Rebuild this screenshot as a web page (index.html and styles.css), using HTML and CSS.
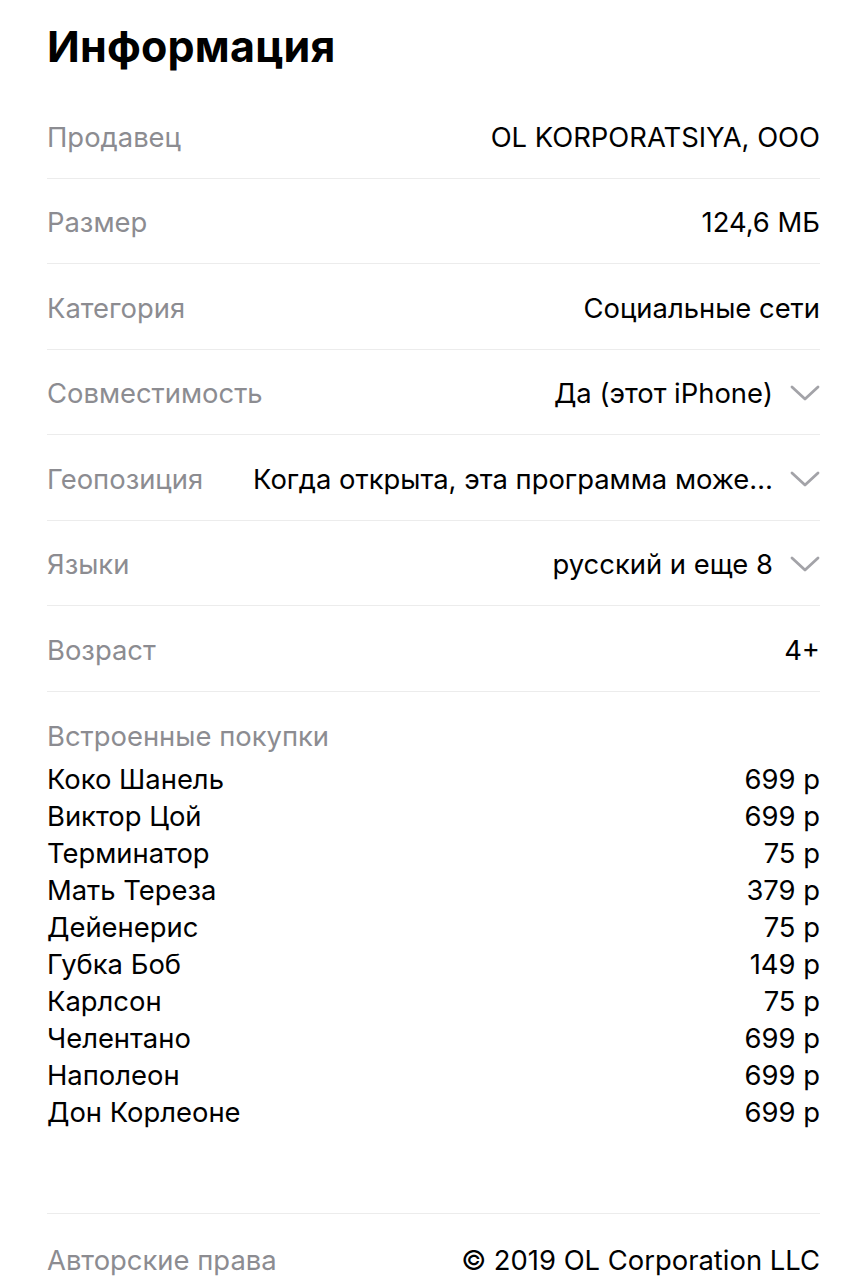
FILE: index.html
```html
<!DOCTYPE html>
<html lang="ru">
<head>
<meta charset="utf-8">
<link rel="stylesheet" href="styles.css">
</head>
<body>
<main class="info">
  <h1 class="title">Информация</h1>
  <div class="row"><span class="label">Продавец</span><span class="value">OL KORPORATSIYA, OOO</span></div>
  <div class="row"><span class="label">Размер</span><span class="value">124,6 МБ</span></div>
  <div class="row"><span class="label">Категория</span><span class="value">Социальные сети</span></div>
  <div class="row"><span class="label">Совместимость</span><span class="value">Да (этот iPhone)</span><svg class="chev" viewBox="0 0 30 16"><path d="M2 2 L15 14 L28 2"/></svg></div>
  <div class="row"><span class="label">Геопозиция</span><span class="value">Когда открыта, эта программа може…</span><svg class="chev" viewBox="0 0 30 16"><path d="M2 2 L15 14 L28 2"/></svg></div>
  <div class="row"><span class="label">Языки</span><span class="value">русский и еще 8</span><svg class="chev" viewBox="0 0 30 16"><path d="M2 2 L15 14 L28 2"/></svg></div>
  <div class="row"><span class="label">Возраст</span><span class="value">4+</span></div>
  <section class="purchases">
    <div class="label phead">Встроенные покупки</div>
    <ul class="plist">
      <li><span>Коко Шанель</span><span>699 р</span></li>
      <li><span>Виктор Цой</span><span>699 р</span></li>
      <li><span>Терминатор</span><span>75 р</span></li>
      <li><span>Мать Тереза</span><span>379 р</span></li>
      <li><span>Дейенерис</span><span>75 р</span></li>
      <li><span>Губка Боб</span><span>149 р</span></li>
      <li><span>Карлсон</span><span>75 р</span></li>
      <li><span>Челентано</span><span>699 р</span></li>
      <li><span>Наполеон</span><span>699 р</span></li>
      <li><span>Дон Корлеоне</span><span>699 р</span></li>
    </ul>
  </section>
  <div class="row last"><span class="label">Авторские права</span><span class="value">© 2019 OL Corporation LLC</span></div>
</main>
</body>
</html>
```

FILE: styles.css
```css
html, body {
  margin: 0;
  padding: 0;
  background: #ffffff;
}
body {
  font-family: "Inter", "Liberation Sans", sans-serif;
  color: #000000;
  -webkit-font-smoothing: antialiased;
}
.info {
  padding: 0 46px 0 47px;
}
.title {
  margin: 0;
  height: 93px;
  font-size: 43px;
  font-weight: 700;
  line-height: 93px;
  letter-spacing: 0.2px;
}
.row {
  display: flex;
  align-items: center;
  height: 85.5px;
  padding-top: 3px;
  box-sizing: border-box;
  border-bottom: 1px solid #ececec;
  font-size: 27.4px;
}
.label {
  color: #8c8c91;
  font-size: 27.4px;
  white-space: nowrap;
  flex: none;
}
.value {
  margin-left: auto;
  white-space: nowrap;
  padding-left: 20px;
}
.chev {
  flex: none;
  width: 30px;
  height: 16px;
  margin-left: 17px;
  fill: none;
  stroke: #a3a3a8;
  stroke-width: 2.8;
  stroke-linecap: round;
  stroke-linejoin: round;
}
.purchases {
  padding-top: 26px;
  height: 522px;
  box-sizing: border-box;
  border-bottom: 1px solid #ececec;
}
.phead {
  line-height: 37px;
  margin-bottom: 6px;
}
.plist {
  list-style: none;
  margin: 0;
  padding: 0;
  font-size: 27.4px;
}
.plist li {
  display: flex;
  justify-content: space-between;
  line-height: 37px;
}
.row.last {
  border-bottom: none;
  height: 92px;
  padding-top: 0;
}
```
